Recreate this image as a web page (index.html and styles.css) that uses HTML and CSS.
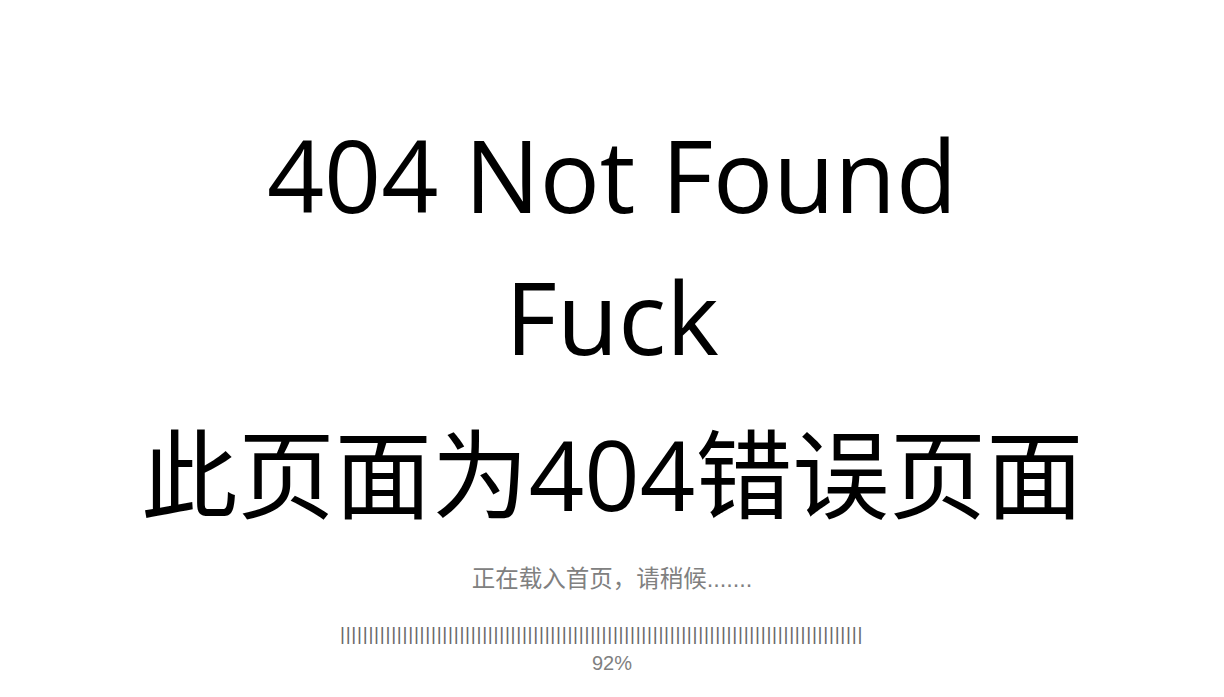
FILE: index.html
```html
<!DOCTYPE html>
<html lang="zh-CN">
<head>
<meta charset="utf-8">
<title>404 Not Found</title>
<link rel="stylesheet" href="styles.css">
</head>
<body>
<main class="page">
  <h1 class="title title-en">404 Not Found</h1>
  <h1 class="title title-en">Fuck</h1>
  <h1 class="title title-cn">此页面为404错误页面</h1>
  <p class="loading">正在载入首页，请稍候.......</p>
  <div class="progress">
    <div class="bars">||||||||||||||||||||||||||||||||||||||||||||||||||||||||||||||||||||||||||||||||||||||||||||</div>
    <div class="percent">92%</div>
  </div>
</main>
</body>
</html>
```
FILE: styles.css
```css
html, body {
  margin: 0;
  padding: 0;
  background: #ffffff;
}
.page {
  display: flex;
  flex-direction: column;
  align-items: center;
  padding-top: 103px;
  font-family: "Open Sans", "Noto Sans CJK SC", sans-serif;
}
.title {
  margin: 0;
  font-weight: 400;
  font-size: 100px;
  line-height: 142px;
  color: #000;
  white-space: nowrap;
}
.title-cn {
  margin-top: 15px;
  font-size: 97px;
}
.loading {
  margin: 20px 0 0;
  font-family: "Liberation Sans", "Noto Sans CJK SC", sans-serif;
  font-size: 23.5px;
  line-height: 30px;
  color: #808080;
}
.progress {
  width: 544px;
  margin-top: 29px;
  display: flex;
  flex-direction: column;
}
.bars {
  font-family: "Liberation Sans", sans-serif;
  font-size: 19px;
  line-height: 22px;
  letter-spacing: 0.75px;
  color: #6a6a6a;
  white-space: nowrap;
  text-align: left;
}
.percent {
  margin-top: 6px;
  text-align: center;
  font-family: "Liberation Sans", sans-serif;
  font-size: 20px;
  line-height: 24px;
  color: #808080;
}
```
